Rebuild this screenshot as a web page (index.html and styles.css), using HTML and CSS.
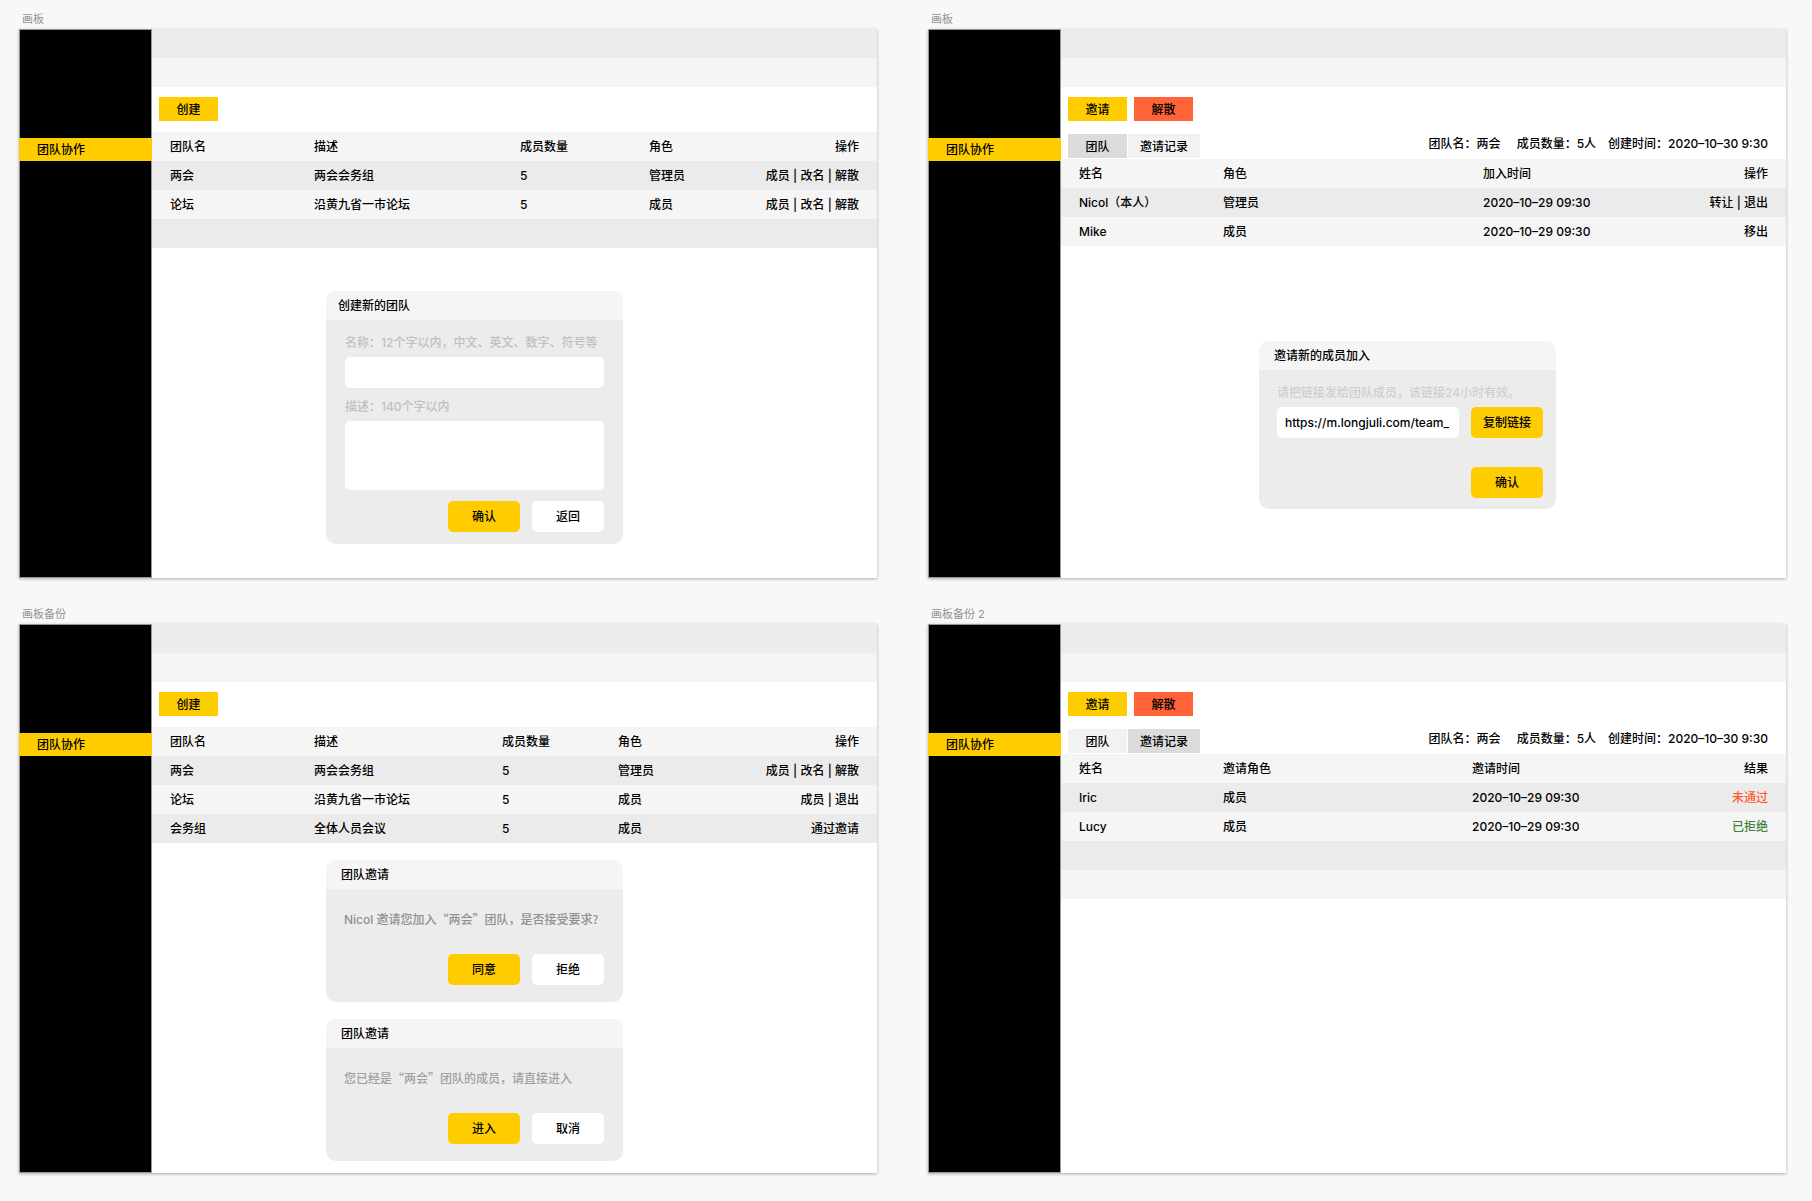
FILE: index.html
```html
<!DOCTYPE html>
<html lang="zh-CN">
<head>
<meta charset="utf-8">
<title>团队协作</title>
<link rel="stylesheet" href="styles.css">
</head>
<body>
<main class="canvas">

  <section class="artboard">
    <h2 class="artboard-name">画板</h2>
    <div class="board">
      <nav class="sidebar"><a class="nav-item" href="#">团队协作</a></nav>
      <div class="content">
        <div class="bar"></div>
        <div class="bar bar-light"></div>
        <div class="toolbar"><button class="action" type="button">创建</button></div>
        <table class="grid">
          <colgroup><col class="w-144"><col class="w-206"><col class="w-129"><col><col></colgroup>
          <thead>
            <tr><th>团队名</th><th>描述</th><th>成员数量</th><th>角色</th><th>操作</th></tr>
          </thead>
          <tbody>
            <tr><td>两会</td><td>两会会务组</td><td>5</td><td>管理员</td><td><a href="#">成员</a> | <a href="#">改名</a> | <a href="#">解散</a></td></tr>
            <tr><td>论坛</td><td>沿黄九省一市论坛</td><td>5</td><td>成员</td><td><a href="#">成员</a> | <a href="#">改名</a> | <a href="#">解散</a></td></tr>
            <tr><td colspan="5"></td></tr>
          </tbody>
        </table>
        <form class="dialog dialog-create">
          <h3 class="dialog-title">创建新的团队</h3>
          <div class="dialog-body">
            <label class="hint" for="team-name">名称：12个字以内，中文、英文、数字、符号等</label>
            <input class="field" id="team-name" type="text">
            <label class="hint" for="team-desc">描述：140个字以内</label>
            <textarea class="field field-area" id="team-desc"></textarea>
            <div class="buttons">
              <button class="btn btn-primary" type="button">确认</button>
              <button class="btn" type="button">返回</button>
            </div>
          </div>
        </form>
      </div>
    </div>
  </section>

  <section class="artboard">
    <h2 class="artboard-name">画板</h2>
    <div class="board">
      <nav class="sidebar"><a class="nav-item" href="#">团队协作</a></nav>
      <div class="content">
        <div class="bar"></div>
        <div class="bar bar-light"></div>
        <div class="toolbar">
          <button class="action" type="button">邀请</button>
          <button class="action action-danger" type="button">解散</button>
        </div>
        <div class="subbar">
          <button class="tab tab-active" type="button">团队</button>
          <button class="tab tab-wide" type="button">邀请记录</button>
          <p class="info"><span class="info-name">团队名：两会</span><span>成员数量：5人</span><span>创建时间：2020–10–30 9:30</span></p>
        </div>
        <table class="grid">
          <colgroup><col class="w-144"><col class="w-260"><col><col></colgroup>
          <thead>
            <tr><th>姓名</th><th>角色</th><th>加入时间</th><th>操作</th></tr>
          </thead>
          <tbody>
            <tr><td>Nicol（本人）</td><td>管理员</td><td>2020–10–29 09:30</td><td><a href="#">转让</a> | <a href="#">退出</a></td></tr>
            <tr><td>Mike</td><td>成员</td><td>2020–10–29 09:30</td><td><a href="#">移出</a></td></tr>
          </tbody>
        </table>
        <form class="dialog dialog-invite">
          <h3 class="dialog-title">邀请新的成员加入</h3>
          <div class="dialog-body">
            <label class="hint" for="team-link">请把链接发给团队成员，该链接24小时有效。</label>
            <div class="buttons">
              <input class="field field-link" id="team-link" type="text" value="https://m.longjuli.com/team_">
              <button class="btn btn-primary" type="button">复制链接</button>
            </div>
            <div class="buttons buttons-last"><button class="btn btn-primary" type="button">确认</button></div>
          </div>
        </form>
      </div>
    </div>
  </section>

  <section class="artboard">
    <h2 class="artboard-name">画板备份</h2>
    <div class="board">
      <nav class="sidebar"><a class="nav-item" href="#">团队协作</a></nav>
      <div class="content">
        <div class="bar"></div>
        <div class="bar bar-light"></div>
        <div class="toolbar"><button class="action" type="button">创建</button></div>
        <table class="grid">
          <colgroup><col class="w-144"><col class="w-188"><col class="w-116"><col><col></colgroup>
          <thead>
            <tr><th>团队名</th><th>描述</th><th>成员数量</th><th>角色</th><th>操作</th></tr>
          </thead>
          <tbody>
            <tr><td>两会</td><td>两会会务组</td><td>5</td><td>管理员</td><td><a href="#">成员</a> | <a href="#">改名</a> | <a href="#">解散</a></td></tr>
            <tr><td>论坛</td><td>沿黄九省一市论坛</td><td>5</td><td>成员</td><td><a href="#">成员</a> | <a href="#">退出</a></td></tr>
            <tr><td>会务组</td><td>全体人员会议</td><td>5</td><td>成员</td><td><a href="#">通过邀请</a></td></tr>
          </tbody>
        </table>
        <div class="dialog dialog-message">
          <h3 class="dialog-title">团队邀请</h3>
          <div class="dialog-body">
            <p class="message"><span class="latin">Nicol </span>邀请您加入“两会”团队，是否接受要求?</p>
            <div class="buttons">
              <button class="btn btn-primary" type="button">同意</button>
              <button class="btn" type="button">拒绝</button>
            </div>
          </div>
        </div>
        <div class="dialog dialog-message">
          <h3 class="dialog-title">团队邀请</h3>
          <div class="dialog-body">
            <p class="message message-light">您已经是“两会”团队的成员，请直接进入</p>
            <div class="buttons">
              <button class="btn btn-primary" type="button">进入</button>
              <button class="btn" type="button">取消</button>
            </div>
          </div>
        </div>
      </div>
    </div>
  </section>

  <section class="artboard">
    <h2 class="artboard-name">画板备份 2</h2>
    <div class="board">
      <nav class="sidebar"><a class="nav-item" href="#">团队协作</a></nav>
      <div class="content">
        <div class="bar"></div>
        <div class="bar bar-light"></div>
        <div class="toolbar">
          <button class="action" type="button">邀请</button>
          <button class="action action-danger" type="button">解散</button>
        </div>
        <div class="subbar">
          <button class="tab" type="button">团队</button>
          <button class="tab tab-wide tab-active" type="button">邀请记录</button>
          <p class="info"><span class="info-name">团队名：两会</span><span>成员数量：5人</span><span>创建时间：2020–10–30 9:30</span></p>
        </div>
        <table class="grid">
          <colgroup><col class="w-144"><col class="w-249"><col><col></colgroup>
          <thead>
            <tr><th>姓名</th><th>邀请角色</th><th>邀请时间</th><th>结果</th></tr>
          </thead>
          <tbody>
            <tr><td>Iric</td><td>成员</td><td>2020–10–29 09:30</td><td class="failed">未通过</td></tr>
            <tr><td>Lucy</td><td>成员</td><td>2020–10–29 09:30</td><td class="refused">已拒绝</td></tr>
            <tr><td colspan="4"></td></tr>
            <tr><td colspan="4"></td></tr>
          </tbody>
        </table>
      </div>
    </div>
  </section>

</main>
</body>
</html>
```

FILE: styles.css
```css
* {
  box-sizing: border-box;
}

body {
  margin: 0;
  background: #f8f8f8;
  color: #000;
  font: 500 12px/18px Inter, "Noto Sans CJK SC", sans-serif;
}

h2, h3, p {
  margin: 0;
  font: inherit;
}

button, input, textarea {
  margin: 0;
  border: 0;
  padding: 0;
  color: inherit;
  font: inherit;
}

a {
  color: inherit;
  text-decoration: none;
}

.canvas {
  display: grid;
  grid-template-columns: 1fr 1fr;
  grid-auto-rows: 1fr;
  gap: 28px 51px;
  min-height: 100vh;
  padding: 11px 26px 28px 19px;
}

.artboard {
  display: flex;
  flex-direction: column;
}

.artboard-name {
  padding: 0 3px 2px;
  color: #939393;
  font-size: 11px;
  font-weight: 400;
  line-height: 16px;
}

.board {
  display: flex;
  flex: 1;
  background: #fff;
  box-shadow: 0 1px 3px rgba(0, 0, 0, 0.3);
}

.sidebar {
  flex: none;
  width: 133px;
  padding-top: 108px;
  border: 1px solid #979797;
  background: #000;
}

.nav-item {
  display: block;
  margin: 0 -1px;
  padding-left: 18px;
  background: #fc0;
  line-height: 23px;
}

.content {
  flex: 1;
  min-width: 0;
}

.bar {
  height: 29px;
  background: #ececec;
}

.bar-light {
  background: #f5f5f5;
}

.toolbar {
  display: flex;
  gap: 7px;
  padding: 10px 7px 11px;
}

.action,
.tab {
  width: 59px;
  height: 24px;
  padding-top: 1px;
}

.action {
  background: #fc0;
}

.action-danger {
  background: #ff6337;
}

.subbar {
  display: flex;
  gap: 1px;
  padding: 2px 18px 1px 7px;
}

.tab {
  background: #f2f2f2;
}

.tab-wide {
  width: 72px;
}

.tab-active {
  background: #dbdbdb;
}

.info {
  display: flex;
  gap: 12px;
  margin-left: auto;
  padding-top: 1px;
}

.info-name {
  margin-right: 4px;
}

.grid {
  width: 100%;
  table-layout: fixed;
  border-collapse: collapse;
}

.w-116 { width: 116px; }
.w-129 { width: 129px; }
.w-144 { width: 144px; }
.w-188 { width: 188px; }
.w-206 { width: 206px; }
.w-249 { width: 249px; }
.w-260 { width: 260px; }

.grid tr {
  height: 29px;
  background: #f5f5f5;
}

.grid tbody tr:nth-child(odd) {
  background: #ebebeb;
}

.grid th,
.grid td {
  padding: 0 0 0 18px;
  font-weight: 500;
  text-align: left;
  white-space: nowrap;
}

.grid th:last-child,
.grid td:last-child {
  padding: 0 18px 0 0;
  text-align: right;
}

.grid .failed {
  color: #ff5a2b;
}

.grid .refused {
  color: #3f7f3c;
}

.dialog {
  width: 297px;
  border-radius: 10px;
  background: #ececec;
  overflow: hidden;
}

.dialog-title {
  padding-left: 15px;
  background: #f5f5f5;
  line-height: 29px;
}

.dialog-create {
  margin: 43px 0 0 174px;
}

.dialog-create .dialog-title {
  padding-left: 12px;
}

.dialog-create .dialog-body {
  padding: 14px 19px 12px;
}

.dialog-invite {
  margin: 95px 0 0 198px;
}

.dialog-invite .dialog-body {
  padding: 14px 13px 11px 18px;
}

.dialog-message {
  margin: 17px 0 0 174px;
}

.dialog-message .dialog-body {
  padding: 21px 19px 17px 18px;
}

.hint {
  display: block;
  margin-bottom: 5px;
  color: #c0c0c0;
}

.dialog-invite .hint {
  color: #cfcfcf;
}

.field {
  display: block;
  width: 100%;
  height: 31px;
  margin-bottom: 10px;
  padding: 0 8px;
  border-radius: 5px;
  background: #fff;
}

.field-area {
  height: 69px;
  margin-bottom: 11px;
  resize: none;
}

.field-link {
  flex: 1;
  min-width: 0;
  margin-bottom: 0;
  padding-right: 4px;
}

.buttons {
  display: flex;
  justify-content: flex-end;
  gap: 12px;
}

.buttons-last {
  margin-top: 29px;
}

.btn {
  width: 72px;
  height: 31px;
  border-radius: 5px;
  background: #fff;
}

.btn-primary {
  background: #fc0;
}

.message {
  height: 19px;
  margin-bottom: 25px;
  color: #909090;
  font-family: "Noto Sans CJK SC", sans-serif;
  white-space: nowrap;
}

.message-light {
  color: #a0a0a0;
}

.latin {
  font-family: Inter, sans-serif;
}
```
